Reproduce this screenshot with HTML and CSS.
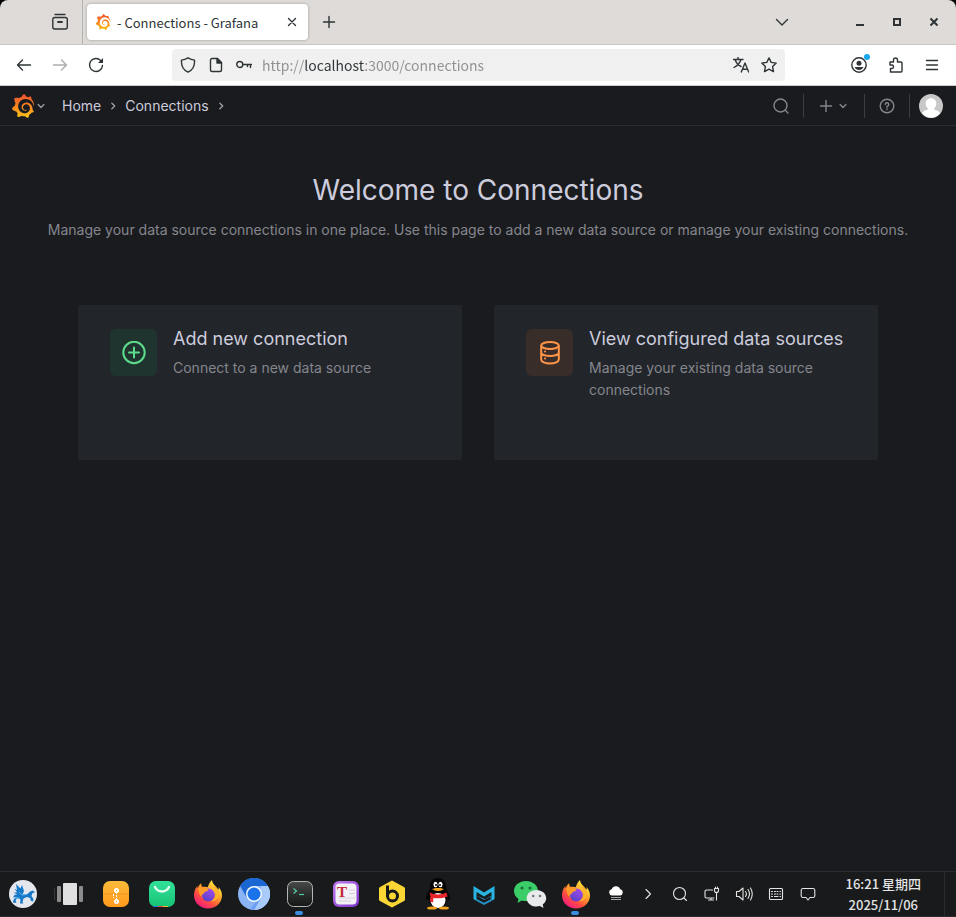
FILE: index.html
```
<!DOCTYPE html>
<html lang="en">
<head>
  <meta charset="UTF-8">
  <meta name="viewport" content="width=device-width, initial-scale=1.0">
  <title>Connections - Grafana</title>
  <link rel="stylesheet" href="styles.css">
</head>
<body>
  <!-- shared icons -->
  <svg class="defs" width="0" height="0" aria-hidden="true">
    <defs>
      <linearGradient id="grafanaFill" x1="0" y1="1" x2="0" y2="0">
        <stop offset="0" stop-color="#fcc51c"/>
        <stop offset="0.45" stop-color="#f98a1d"/>
        <stop offset="1" stop-color="#f05030"/>
      </linearGradient>
      <linearGradient id="foxFill" x1="0.85" y1="0.1" x2="0.2" y2="1">
        <stop offset="0" stop-color="#fff14a"/>
        <stop offset="0.35" stop-color="#ffa52a"/>
        <stop offset="0.65" stop-color="#ff4f3c"/>
        <stop offset="1" stop-color="#f0128c"/>
      </linearGradient>
      <linearGradient id="foxCore" x1="0.7" y1="0" x2="0.2" y2="1">
        <stop offset="0" stop-color="#a04be8"/>
        <stop offset="1" stop-color="#5341c8"/>
      </linearGradient>
      <linearGradient id="archiveFill" x1="0" y1="0" x2="0" y2="1">
        <stop offset="0" stop-color="#fbbb3c"/>
        <stop offset="1" stop-color="#ff9a1c"/>
      </linearGradient>
      <linearGradient id="storeFill" x1="0" y1="0" x2="0" y2="1">
        <stop offset="0" stop-color="#32e29a"/>
        <stop offset="1" stop-color="#18c274"/>
      </linearGradient>
      <linearGradient id="termFill" x1="0" y1="0" x2="0" y2="1">
        <stop offset="0" stop-color="#4a4c4c"/>
        <stop offset="0.5" stop-color="#2b2d2d"/>
        <stop offset="1" stop-color="#151616"/>
      </linearGradient>
      <linearGradient id="typeFill" x1="0" y1="0" x2="1" y2="1">
        <stop offset="0" stop-color="#c07af0"/>
        <stop offset="1" stop-color="#7a35c8"/>
      </linearGradient>
      <symbol id="grafana" viewBox="0 0 24 24">
        <path fill="url(#grafanaFill)" d="M23.02 10.59a8.578 8.578 0 0 0-.862-3.034 8.911 8.911 0 0 0-1.789-2.445c.337-1.342-.413-2.505-.413-2.505-1.292-.08-2.113.4-2.416.62-.052-.02-.102-.044-.154-.064-.22-.089-.446-.172-.677-.247-.231-.073-.47-.14-.711-.197a9.867 9.867 0 0 0-.875-.161C14.557.753 12.94 0 12.94 0c-1.804 1.145-2.147 2.744-2.147 2.744l-.018.093c-.098.029-.2.057-.298.088-.138.042-.275.094-.413.143-.138.055-.275.107-.41.166a8.869 8.869 0 0 0-1.557.87l-.063-.029c-2.497-.955-4.716.195-4.716.195-.203 2.658.996 4.33 1.235 4.636a11.608 11.608 0 0 0-.607 2.635C1.636 12.684.953 15.014.953 15.014c1.926 2.214 4.171 2.351 4.171 2.351.003-.002.006-.002.006-.005.285.509.615.994.986 1.446.156.19.32.371.488.548-.704 2.009.099 3.68.099 3.68 2.144.08 3.553-.937 3.849-1.173a9.784 9.784 0 0 0 3.164.501h.08l.055-.003.107-.002.103-.005.003.002c1.01 1.44 2.788 1.646 2.788 1.646 1.264-1.332 1.337-2.653 1.337-2.94v-.058c0-.02-.003-.039-.003-.06.265-.187.52-.387.758-.6a7.875 7.875 0 0 0 1.415-1.7c1.43.083 2.437-.885 2.437-.885-.236-1.49-1.085-2.216-1.264-2.354l-.018-.013-.016-.013a.217.217 0 0 1-.031-.02c.008-.092.016-.18.02-.27.011-.162.016-.323.016-.48v-.253l-.005-.098-.008-.135a1.891 1.891 0 0 0-.01-.13c-.003-.042-.008-.083-.013-.125l-.016-.124-.018-.122a6.215 6.215 0 0 0-2.032-3.73 6.015 6.015 0 0 0-3.222-1.46 6.292 6.292 0 0 0-.85-.048l-.107.002h-.063l-.044.003-.104.008a4.777 4.777 0 0 0-3.335 1.695c-.332.4-.592.84-.768 1.297a4.594 4.594 0 0 0-.312 1.817l.003.091c.005.055.007.11.013.164a3.615 3.615 0 0 0 .698 1.82 3.53 3.53 0 0 0 1.827 1.282c.33.098.66.14.971.137.039 0 .078 0 .114-.002l.063-.003c.02 0 .041-.003.062-.003.034-.002.065-.007.099-.01.007 0 .018-.003.028-.003l.031-.005.06-.008a1.18 1.18 0 0 0 .112-.02c.036-.008.072-.013.109-.024a2.634 2.634 0 0 0 .914-.415c.028-.02.056-.041.085-.065a.248.248 0 0 0 .039-.35.244.244 0 0 0-.309-.06l-.078.042c-.09.044-.184.083-.283.116a2.476 2.476 0 0 1-.475.096c-.028.003-.054.006-.083.006l-.083.002c-.026 0-.054 0-.08-.002l-.102-.006h-.012l-.024.006c-.016-.003-.031-.003-.044-.006-.031-.002-.06-.007-.091-.01a2.59 2.59 0 0 1-.724-.213 2.557 2.557 0 0 1-.667-.438 2.52 2.52 0 0 1-.805-1.475 2.306 2.306 0 0 1-.029-.444l.006-.122v-.023l.002-.031c.003-.021.003-.04.005-.06a3.163 3.163 0 0 1 1.352-2.29 3.12 3.12 0 0 1 .937-.43 2.946 2.946 0 0 1 .776-.101h.06l.07.002.045.003h.026l.07.005a4.041 4.041 0 0 1 1.635.49 3.94 3.94 0 0 1 1.602 1.662 3.77 3.77 0 0 1 .397 1.414l.005.076.003.075c.002.026.002.05.002.075 0 .024.003.052 0 .07v.065l-.002.073-.008.174a6.195 6.195 0 0 1-.08.639 5.1 5.1 0 0 1-.267.927 5.31 5.31 0 0 1-.624 1.13 5.052 5.052 0 0 1-3.237 2.014 4.82 4.82 0 0 1-.649.066l-.039.003h-.287a6.607 6.607 0 0 1-1.716-.265 6.776 6.776 0 0 1-3.4-2.274 6.75 6.75 0 0 1-.746-1.15 6.616 6.616 0 0 1-.714-2.596l-.005-.083-.002-.02v-.056l-.003-.073v-.096l-.003-.104v-.07l.003-.163c.008-.22.026-.45.054-.678a8.707 8.707 0 0 1 .28-1.355c.128-.444.286-.872.473-1.277a7.04 7.04 0 0 1 1.456-2.1 5.925 5.925 0 0 1 .953-.763c.169-.111.343-.213.524-.306.089-.05.182-.091.273-.135.047-.02.093-.042.138-.062a7.177 7.177 0 0 1 .714-.267l.145-.045c.049-.015.098-.026.148-.041.098-.029.197-.052.296-.076.049-.013.1-.02.15-.033l.15-.032.151-.028.076-.013.075-.01.153-.024c.057-.01.114-.013.171-.023l.169-.021c.036-.003.073-.008.106-.01l.073-.008.036-.003.042-.002c.057-.003.114-.008.171-.01l.086-.006h.023l.037-.003.145-.007a7.999 7.999 0 0 1 1.708.125 7.917 7.917 0 0 1 2.048.68 8.253 8.253 0 0 1 1.672 1.09l.09.077.089.078c.06.052.114.107.171.159.057.052.112.106.166.16.052.055.107.107.159.164a8.671 8.671 0 0 1 1.41 1.978c.012.026.028.052.04.078l.04.078.075.156c.023.051.05.1.07.153l.065.15a8.848 8.848 0 0 1 .45 1.34.19.19 0 0 0 .201.142.186.186 0 0 0 .172-.184c.01-.246.002-.532-.024-.856z"/>
      </symbol>
      <symbol id="firefox" viewBox="0 0 30 30">
        <path fill="url(#foxFill)" d="M19 1c.3 3.400 2 4.700 4 6.700C24.200 9 25 10 25.300 11c.5-.8.5-2 .2-3 2.500 2.500 3.600 5.800 3.500 9C28.700 24.200 22.600 29.500 15 29.500S1.200 24 1 16.500C.9 12.800 2.200 9.500 4.300 7c0 1 .1 1.700.5 2.200C5.500 7 6.500 5.300 8.200 4.200c-.1 1.600.4 3 1.600 3.900 1.500-.5 3.600-.4 5 .2C15.500 5.500 17 3 19 1z"/>
        <circle cx="15.300" cy="16" r="6.500" fill="url(#foxCore)"/>
        <path fill="#ff9a2a" d="M4.800 9.200C7 8 9.800 8 11.800 9.600c1.200 0 2.700.1 3.800.8-.5 1.500-2.300 1.700-3.600 2.400-.7.500-.4 1.300-1.200 1.700-1.600.7-2.500 2-2 3.900-2.500-2.200-3.200-5.700-4-9.200z"/>
        <path fill="#ffb52a" d="M18.600 7.500c4.200 2.400 5.600 7.300 3.400 11.200-1 1.800-2.700 3.200-4.600 3.700 6.300.6 9.600-5 8-11l-3-4z"/>
      </symbol>
      <symbol id="chevronDown" viewBox="0 0 10 10">
        <path d="M2.600 3.800L5 6.200l2.400-2.400" fill="none" stroke="currentColor" stroke-width="1.100" stroke-linecap="round" stroke-linejoin="round"/>
      </symbol>
      <symbol id="chevronRight" viewBox="0 0 10 10">
        <path d="M4 2.600L6.400 5 4 7.400" fill="none" stroke="currentColor" stroke-width="1.100" stroke-linecap="round" stroke-linejoin="round"/>
      </symbol>
    </defs>
  </svg>

  <div class="tabbar">
    <button class="firefox-view" aria-label="Firefox View">
      <svg class="line" width="18" height="18" viewBox="0 0 18 18"><path d="M4 1.500h10"/><rect x="1.800" y="4.500" width="14.500" height="11.500" rx="2"/><path d="M7 9h4" stroke-width="1.800"/></svg>
    </button>
    <div class="tab">
      <svg width="16" height="16"><use href="#grafana"/></svg>
      <span class="tab-title">- Connections - Grafana</span>
      <button class="tab-close" aria-label="Close tab">
        <svg class="line" width="10" height="10" viewBox="0 0 10 10"><path d="M1.500 1.500l7 7M8.500 1.500l-7 7"/></svg>
      </button>
    </div>
    <button class="new-tab" aria-label="New tab">
      <svg class="line" width="14" height="14" viewBox="0 0 14 14"><path d="M7 1.500v11M1.500 7h11"/></svg>
    </button>
    <button class="all-tabs" aria-label="List all tabs">
      <svg class="line" width="14" height="14" viewBox="0 0 14 14"><path d="M1.500 4.500L7 10l5.500-5.500"/></svg>
    </button>
    <div class="window-buttons">
      <button aria-label="Minimize"><svg width="12" height="12"><path d="M2 8h8v2H2z" fill="#2e3436"/></svg></button>
      <button aria-label="Maximize"><svg width="12" height="12"><path d="M3 3h6v6H3z" fill="none" stroke="#2e3436" stroke-width="2"/></svg></button>
      <button aria-label="Close"><svg width="12" height="12"><path d="M2.500 2.500l7 7M9.500 2.500l-7 7" stroke="#2e3436" stroke-width="2"/></svg></button>
    </div>
  </div>

  <div class="toolbar">
    <div class="nav-buttons">
      <button aria-label="Back"><svg class="line" width="16" height="16" viewBox="0 0 16 16"><path d="M14.500 8h-13M6.500 3L1.500 8l5 5"/></svg></button>
      <button aria-label="Forward" disabled><svg class="line" width="16" height="16" viewBox="0 0 16 16"><path d="M1.500 8h13M9.500 3l5 5-5 5"/></svg></button>
      <button aria-label="Reload"><svg class="line" width="16" height="16" viewBox="0 0 16 16"><path d="M14.500 8.500A6.500 6.500 0 1 1 12.800 3.600"/><path d="M15 1v5h-5z" fill="currentColor" stroke="none"/></svg></button>
    </div>
    <div class="urlbar">
      <svg class="line" width="16" height="16" viewBox="0 0 16 16"><path d="M8 .8c2 1.200 4 2 6.500 2.300.4 5.500-1.500 10-6.500 12.100C3 13.100 1.100 8.600 1.500 3.100 4 2.800 6 2 8 .8z"/></svg>
      <svg class="line" width="16" height="16" viewBox="0 0 16 16"><path d="M4 1.500h5.500l4 4V13a1.500 1.500 0 0 1-1.500 1.500H4A1.500 1.500 0 0 1 2.500 13V3A1.500 1.500 0 0 1 4 1.500z"/><path d="M9 1.500V6h4.500z" fill="currentColor"/></svg>
      <svg class="line" width="16" height="16" viewBox="0 0 16 16"><circle cx="3.800" cy="7.500" r="3"/><path d="M7 7.500h8.500M11.500 7.500V9.500M14.500 7.500v3"/></svg>
      <input class="url" type="text" aria-label="Address" value="http://localhost:3000/connections">
      <button aria-label="Translate page"><svg class="line" width="16" height="16" viewBox="0 0 16 16"><path d="M.5 2.500h9.500M5 .5v2M8 2.500C7 6 4.500 8.500 1 10.500M2 2.500c1 3 3 5.500 6 7M8.300 15L12 6l3.700 9M9.500 12.300h5"/></svg></button>
      <button aria-label="Bookmark"><svg class="line" width="16" height="16" viewBox="0 0 16 16"><path d="M8 .9l2.200 4.500 5 .7-3.600 3.500.9 5L8 12.200 3.500 14.600l.9-5L.8 6.100l5-.7z"/></svg></button>
    </div>
    <div class="menu-buttons">
      <button class="account" aria-label="Account"><svg class="line" width="16" height="16" viewBox="0 0 16 16"><circle cx="8" cy="8" r="7.200"/><circle cx="8" cy="6.200" r="2.500" fill="currentColor" stroke="none"/><path d="M3.500 10h9c-1 2-2.500 3-4.500 3s-3.500-1-4.500-3z" fill="currentColor" stroke="none"/></svg><span class="badge"></span></button>
      <button aria-label="Extensions"><svg class="line" width="16" height="16" viewBox="0 0 16 16"><path d="M2.500 15V11.500h1.300a1.700 1.700 0 0 0 0-3.500H2V5h3.500V3a2 2 0 0 1 4 0v2h3.500a1 1 0 0 1 1 1V14a1 1 0 0 1-1 1z"/></svg></button>
      <button aria-label="Menu"><svg class="line" width="14" height="16" viewBox="0 0 14 16"><path d="M1.500 3.500h11M1.500 8h11M1.500 12.500h11"/></svg></button>
    </div>
  </div>

  <header class="app-header">
    <button class="logo" aria-label="Open menu">
      <svg width="24" height="24"><use href="#grafana"/></svg>
      <svg width="12" height="12"><use href="#chevronDown"/></svg>
    </button>
    <nav class="breadcrumbs">
      <a href="#">Home</a>
      <svg width="12" height="12"><use href="#chevronRight"/></svg>
      <a href="#">Connections</a>
      <svg width="12" height="12"><use href="#chevronRight"/></svg>
    </nav>
    <div class="header-actions">
      <button class="search" aria-label="Search"><svg class="line" width="16" height="16" viewBox="0 0 16 16"><circle cx="7.500" cy="7.500" r="6.500"/><path d="M12.500 12.500l2.500 2.500"/></svg></button>
      <button class="add" aria-label="New"><svg class="line" width="14" height="14" viewBox="0 0 14 14"><path d="M7 1.500v11M1.500 7h11"/></svg><svg width="12" height="12"><use href="#chevronDown"/></svg></button>
      <button class="help" aria-label="Help"><svg class="line" width="16" height="16" viewBox="0 0 16 16"><circle cx="8" cy="8" r="6.800"/><path d="M6.200 6.300A1.800 1.800 0 1 1 8 8.300v1M8 11v.5"/></svg></button>
      <button class="avatar" aria-label="Profile"><svg width="24" height="24" viewBox="0 0 24 24"><circle cx="12" cy="12" r="12" fill="#c8c8c8"/><path d="M12 4.200c3.500 0 5.300 2.400 5.300 5.200 0 2-.8 3.600-2 4.800v1.600c3 .6 5 1.900 5.600 3.400A12 12 0 0 1 12 23.800a12 12 0 0 1-8.900-4.600c.6-1.500 2.600-2.800 5.600-3.400v-1.600c-1.200-1.200-2-2.800-2-4.800 0-2.800 1.800-5.200 5.300-5.200z" fill="#fff"/></svg></button>
    </div>
  </header>

  <main class="page">
    <h1>Welcome to Connections</h1>
    <p class="subtitle">Manage your data source connections in one place. Use this page to add a new data source or manage your existing connections.</p>
    <div class="cards">
      <a class="card" href="#">
        <span class="card-icon green">
          <svg width="24" height="24" viewBox="0 0 24 24" fill="none" stroke="currentColor" stroke-width="2" stroke-linecap="round"><circle cx="12" cy="11.500" r="10.700"/><path d="M12 6.500v10M7 11.500h10"/></svg>
        </span>
        <span class="card-text">
          <h2>Add new connection</h2>
          <p>Connect to a new data source</p>
        </span>
      </a>
      <a class="card" href="#">
        <span class="card-icon orange">
          <svg width="24" height="24" viewBox="0 0 24 24" fill="none" stroke="currentColor" stroke-width="2"><ellipse cx="12" cy="4.500" rx="8.800" ry="3.500"/><path d="M3.200 4.500v14c0 2.200 3.900 4 8.800 4s8.800-1.800 8.800-4v-14M3.200 11.500c0 2 3.900 3.500 8.800 3.500s8.800-1.500 8.800-3.500"/><path d="M7 10.500h.1M7 17.500h.1" stroke-linecap="round"/></svg>
        </span>
        <span class="card-text">
          <h2>View configured data sources</h2>
          <p>Manage your existing data source connections</p>
        </span>
      </a>
    </div>
  </main>

  <footer class="taskbar">
    <button aria-label="Start"><svg width="30" height="30" viewBox="0 0 30 30"><circle cx="15" cy="15" r="14" fill="#e4e8ee"/><path fill="#1878c8" d="M8 5l4.500 4.500L14 6l2 6-1.500 3.500 5-.5 2.500-2.500 3-1 2 2-2.500.5-1 3 2 3-.5 2.500-2-.5-1-3-3-1-3.500 1.500-1 3.500 1 1.500h-3.500l.5-4-3-1.500L7.500 21l1 2.500-3 .5-.5-1.500 1-2.500 2.500-2-3.500.5 1.500-2.500 3-1-4-1 3.500-1L6.500 10 9 11z"/><path d="M11 13l3 3 5-.5M8 18.500l4 1" stroke="#59b6ee" fill="none"/></svg></button>
    <span class="separator"></span>
    <div class="apps">
      <button aria-label="Task view"><svg width="30" height="30"><rect x="8" y="4" width="14" height="22" rx="1" fill="#e0e0e0"/><rect x="2" y="7" width="4" height="16" rx="1" fill="#8c8c8c"/><rect x="24" y="7" width="4" height="16" rx="1" fill="#8c8c8c"/></svg></button>
      <button aria-label="Archive manager"><svg width="30" height="30"><rect x="2" y="2" width="26" height="26" rx="7" fill="url(#archiveFill)"/><path d="M2 15h26" stroke="#e98b14" stroke-width=".6"/><g fill="none" stroke="#fff"><circle cx="15.500" cy="11.500" r="1.600" stroke-width="1.800"/><circle cx="15.500" cy="22.500" r="1.600" stroke-width="1.800"/><path d="M15.500 13v8M12.500 15v4" stroke-dasharray="2 1"/></g></svg></button>
      <button aria-label="App store"><svg width="30" height="30"><rect x="2" y="2" width="26" height="26" rx="7" fill="url(#storeFill)"/><path d="M8 8c3 6 11 6 14 0" fill="none" stroke="#e4fff2" stroke-width="2.400" stroke-linecap="round"/><path d="M6 27.500h5" stroke="#2878e0"/><path d="M11 27.500h5" stroke="#e84a3c"/><path d="M16 27.500h5" stroke="#f7b52c"/></svg></button>
      <button aria-label="Firefox"><svg width="30" height="30"><use href="#firefox"/></svg></button>
      <button aria-label="Chromium"><svg width="32" height="32" viewBox="0 0 32 32"><circle cx="16" cy="16" r="16" fill="#8ab4f4"/><path d="M2.100 8A16 16 0 0 1 29.900 8H16L9 20z" fill="#1a66d2"/><path d="M29.900 8A16 16 0 0 1 16 32l7-12V8z" fill="#a9cbfa"/><path d="M16 32l-3.500-.4L19 22l4-2z" fill="#6b9df0"/><circle cx="16" cy="16" r="8" fill="#f3f7fd"/><circle cx="16" cy="16" r="6.500" fill="#1a73e8"/></svg></button>
      <button class="running" aria-label="Terminal"><svg width="30" height="30"><rect x="2.500" y="2.500" width="25" height="25" rx="6" fill="url(#termFill)" stroke="#b4b6b6"/><path d="M8.500 9.500l3 2.500-3 2.500" fill="none" stroke="#55c8a0" stroke-width="1.300"/><path d="M14 15.500h5" stroke="#55c8a0" stroke-width="1.200"/></svg></button>
      <button aria-label="Text editor"><svg width="30" height="30"><rect x="2" y="2" width="26" height="26" rx="6" fill="url(#typeFill)"/><rect x="4.500" y="4.500" width="21" height="21" rx="4" fill="#f3f1f6"/><path d="M18 11h6M18 14.500h6M8 19h16M8 22h12" stroke="#d2d0dc"/><text x="6" y="18" class="type-letter">T</text></svg></button>
      <button aria-label="Beekeeper"><svg width="30" height="30"><path d="M15 1.500l12 6.500q1 .5 1 1.600v10.800q0 1.100-1 1.600l-12 6.500-12-6.500q-1-.5-1-1.600V9.600Q2 8.500 3 8z" fill="#fad635"/><circle cx="15.500" cy="17" r="5" fill="none" stroke="#151719" stroke-width="3"/><path d="M10.500 6.500V17" stroke="#151719" stroke-width="3"/></svg></button>
      <button aria-label="QQ"><svg width="30" height="32" viewBox="0 0 30 32"><path d="M15 0c5 0 8 3.500 8 8.500 0 3 3.500 7 4 11.500.3 2-1 2.500-2.500.5C24 26 20.500 30 15 30S6 26 5.500 20.500C4 22.500 2.700 22 3 20c.5-4.500 4-8.500 4-11.500C7 3.500 10 0 15 0z" fill="#050505"/><ellipse cx="15" cy="22.500" rx="7.500" ry="7.500" fill="#fff"/><path d="M6.500 14.500c5 2.500 12 2.500 17 0l1 4c-5 2-10 2.200-14 1.500l-.5 4.500-3-1 .5-5z" fill="#e9242a"/><ellipse cx="12.500" cy="6.500" rx="2" ry="2.700" fill="#fff"/><ellipse cx="17.500" cy="6.500" rx="2" ry="2.700" fill="#fff"/><circle cx="13" cy="7" r="1"/><circle cx="17" cy="7" r="1"/><path d="M9 11c3-1.500 9-1.500 12 0-3 2.500-9 2.500-12 0z" fill="#f7a51c"/><ellipse cx="9" cy="30" rx="5" ry="1.600" fill="#f7a51c"/><ellipse cx="21" cy="30" rx="5" ry="1.600" fill="#f7a51c"/></svg></button>
      <button aria-label="Mail"><svg width="30" height="30"><path d="M4.500 7L15 13.500 25.500 7v13l-3 2v-9L15 17.500 7.500 13v9l-3-2z" fill="#29b4e2"/><path d="M7.500 16.500L15 21l7.500-4.500V22L15 26l-7.500-4v-2.500l7.500 4 4-2" fill="#2590c4"/><path d="M8.500 17.500L15 21.500l6.500-4v3L15 23.500l-6.500-3z" fill="#191a1b"/></svg></button>
      <button aria-label="WeChat"><svg width="34" height="30" viewBox="0 0 34 30"><path d="M13 2C6.500 2 1 6.200 1 12c0 3.300 1.700 6 4.500 7.900L4.500 24l4.300-2.500c1.300.4 2.700.6 4.200.6 6.500 0 12-4.300 12-10.100S19.500 2 13 2z" fill="#3bcd68"/><circle cx="9" cy="9" r="1.600" fill="#19713c"/><circle cx="17" cy="9" r="1.600" fill="#19713c"/><path d="M23.500 11c-5.500 0-9.800 3.600-9.800 8.200s4.300 8.300 9.800 8.300c1.200 0 2.300-.2 3.400-.5l3.600 1.900-.8-3.400c2.200-1.500 3.500-3.700 3.500-6.300 0-4.600-4.300-8.200-9.700-8.200z" fill="#e9eaeb"/><circle cx="20.200" cy="17" r="1.300" fill="#777"/><circle cx="27" cy="17" r="1.300" fill="#777"/></svg></button>
      <button class="running" aria-label="Firefox window"><svg width="30" height="30"><use href="#firefox"/></svg></button>
    </div>
    <div class="tray">
      <button aria-label="Weather"><svg width="16" height="16" viewBox="0 0 16 16"><path d="M4 9.500a3.200 3.200 0 0 1-.3-6.300 4.500 4.500 0 0 1 8.500 0 3.200 3.200 0 0 1-.2 6.300z" fill="#fff"/><path d="M3 11.500h10M3 13.500h10" stroke="#aaa"/></svg></button>
      <button aria-label="Show hidden icons"><svg class="line" width="16" height="16" viewBox="0 0 16 16"><path d="M6 3.500l4.500 4.500L6 12.500"/></svg></button>
      <button aria-label="Search"><svg class="line" width="16" height="16" viewBox="0 0 16 16"><circle cx="7.500" cy="7.500" r="6"/><path d="M12 12l2.500 2.500"/></svg></button>
      <button aria-label="Network"><svg class="line" width="16" height="16" viewBox="0 0 16 16"><path d="M8.500 4h-6A1.500 1.500 0 0 0 1 5.500v5A1.500 1.500 0 0 0 2.500 12H10M4.500 14h5M7 12v2M12.500 6.500V14M10.500 2.500v2a2 2 0 0 0 4 0v-2zM11.500 1v1.500M13.500 1v1.500"/></svg></button>
      <button aria-label="Volume"><svg class="line" width="18" height="16" viewBox="0 0 18 16"><path d="M1.500 5.500H4L8 2v12l-4-3.500H1.500zM10.500 5.500q1.800 2.500 0 5M13 3.500q3 4.500 0 9M15.500 2q3.500 6 0 12"/></svg></button>
      <button aria-label="Keyboard"><svg class="line" width="16" height="16" viewBox="0 0 16 16"><rect x="1.500" y="2.500" width="13" height="11" rx="1"/><path d="M3.500 5.500h1M6.500 5.500h1M9 5.500h1M12 5.500h.5M3.500 8h1M6.500 8h1M9 8h1M12 8h.5M3.500 10.500h1M6.500 10.500h3.500M12 10.500h.5"/></svg></button>
      <button aria-label="Notifications"><svg class="line" width="16" height="16" viewBox="0 0 16 16"><path d="M3 2.500h10A1.800 1.800 0 0 1 14.800 4v6A1.800 1.800 0 0 1 13 11.500h-3L8 14l-2-2.500H3A1.800 1.800 0 0 1 1.200 10V4A1.800 1.800 0 0 1 3 2.500z"/></svg></button>
    </div>
    <div class="clock">
      <div>16:21 星期四</div>
      <div>2025/11/06</div>
    </div>
    <button class="show-desktop" aria-label="Show desktop"></button>
  </footer>
</body>
</html>
```
FILE: styles.css
```
* {
  box-sizing: border-box;
}

body {
  display: flex;
  flex-direction: column;
  min-height: 100vh;
  margin: 0;
  background-color: #1a1b1f;
  font-family: Inter, "Noto Sans CJK SC", sans-serif;
  color: #ccccdc;
}

button {
  display: flex;
  justify-content: center;
  align-items: center;
  padding: 0;
  border: none;
  background: none;
  color: inherit;
  cursor: pointer;
}

a {
  color: inherit;
  text-decoration: none;
}

svg {
  flex: none;
  display: block;
}

.defs {
  position: absolute;
}

.line {
  fill: none;
  stroke: currentColor;
  stroke-width: 1.4;
  stroke-linecap: round;
  stroke-linejoin: round;
}

/* browser tabs */
.tabbar {
  display: flex;
  align-items: center;
  height: 45px;
  border-bottom: 1px solid #c8c5c2;
  border-radius: 8px 8px 0 0;
  background-color: #dedbd8;
  box-shadow: 0 -8px 0 8px #000;
  clip-path: inset(0);
  color: #2e3436;
  font-family: "Noto Sans CJK SC", sans-serif;
}

.firefox-view {
  width: 83px;
  height: 44px;
  padding-left: 37px;
  border-right: 1px solid #b5b2af;
}

.tab {
  display: flex;
  align-items: center;
  width: 221px;
  height: 36px;
  margin-left: 4px;
  padding: 0 11px 0 8px;
  border-radius: 4px;
  background-color: #fff;
  box-shadow: 0 0 3px #999;
}

.tab-title {
  flex: 1;
  margin-left: 6px;
  font-size: 13px;
  white-space: nowrap;
}

.new-tab {
  margin-left: 14px;
}

.all-tabs {
  margin-left: auto;
}

.window-buttons {
  display: flex;
  gap: 25px;
  padding: 0 16px 0 65px;
}

/* browser toolbar */
.toolbar {
  display: flex;
  align-items: center;
  height: 41px;
  padding: 0 17px 0 16px;
  border-bottom: 1px solid #ccc;
  background-color: #fff;
  color: #2e3436;
}

.nav-buttons {
  display: flex;
  gap: 20px;
}

.nav-buttons button:disabled {
  color: #adadad;
}

.urlbar {
  flex: 1;
  display: flex;
  align-items: center;
  gap: 12px;
  height: 32px;
  margin: 0 66px 0 68px;
  padding: 0 8px;
  border-radius: 4px;
  background-color: #f0f0f0;
}

/* the host part of the address is darker than the rest */
.url {
  flex: 1;
  min-width: 0;
  height: 32px;
  margin-left: -2px;
  padding: 0;
  border: none;
  outline: none;
  background: linear-gradient(to right, #8f8f8f 42px, #2e3436 42px, #2e3436 102px, #8f8f8f 102px);
  background-clip: text;
  -webkit-background-clip: text;
  color: transparent;
  font-family: "Noto Sans CJK SC", sans-serif;
  font-size: 14px;
}

.menu-buttons {
  display: flex;
  gap: 21px;
}

.account {
  position: relative;
}

.badge {
  position: absolute;
  top: -3px;
  right: -3px;
  width: 6px;
  height: 6px;
  border-radius: 50%;
  background-color: #18a8f0;
}

/* grafana header */
.app-header {
  display: flex;
  align-items: center;
  height: 40px;
  padding: 0 13px 0 11px;
  border-bottom: 1px solid #2b2d33;
  font-size: 14px;
}

.logo {
  color: #9a9ba6;
}

.breadcrumbs {
  display: flex;
  align-items: center;
  gap: 6px;
  margin-left: 15px;
}

.breadcrumbs svg {
  color: #a8a9b4;
}

.header-actions {
  display: flex;
  align-items: center;
  height: 24px;
  margin-left: auto;
  color: #85878f;
}

.header-actions button {
  height: 24px;
}

.search {
  width: 44px;
}

.header-actions .add,
.header-actions .help,
.header-actions .avatar {
  border-left: 1px solid #3b3d43;
}

.add {
  gap: 4px;
  width: 61px;
}

.help {
  width: 45px;
}

.header-actions .avatar {
  width: 34px;
  padding-left: 9px;
}

/* connections page */
.page {
  flex: 1;
  padding: 44px 32px;
}

h1 {
  margin: 0;
  font-size: 28px;
  font-weight: 400;
  line-height: 40px;
  text-align: center;
}

.subtitle {
  margin: 9px 0 0;
  color: #85868d;
  font-size: 14px;
  line-height: 22px;
  text-align: center;
}

.cards {
  display: grid;
  grid-template-columns: 1fr 1fr;
  gap: 32px;
  max-width: 800px;
  margin: 64px auto 0;
}

.card {
  display: flex;
  align-items: flex-start;
  gap: 16px;
  min-height: 155px;
  padding: 24px 32px;
  border-radius: 2px;
  background-color: #22252a;
}

.card-icon {
  flex: none;
  display: flex;
  justify-content: center;
  align-items: center;
  width: 47px;
  height: 47px;
  border-radius: 6px;
}

.green {
  background-color: #20342f;
  color: #5cdb8b;
}

.orange {
  background-color: #382d29;
  color: #ff9447;
}

.card h2 {
  margin: 0;
  font-size: 18px;
  font-weight: 400;
  line-height: 20px;
}

.card p {
  margin: 8px 0 0;
  color: #85868d;
  font-size: 14px;
  line-height: 22px;
}

/* desktop taskbar */
.taskbar {
  display: flex;
  align-items: center;
  height: 46px;
  padding-left: 8px;
  border: 1px solid #2c2c2d;
  border-width: 1px 0;
  background-color: #191a1b;
  color: #e4e4e4;
}

.taskbar button {
  width: 30px;
  height: 44px;
}

.separator {
  width: 1px;
  height: 12px;
  margin-left: 16px;
  background-color: #38393a;
}

.apps {
  display: flex;
  gap: 16px;
}

.running {
  position: relative;
}

.running::after {
  content: "";
  position: absolute;
  bottom: 1px;
  left: 10px;
  width: 8px;
  height: 4px;
  border-radius: 2px;
  background-color: #3c8ce0;
}

.type-letter {
  fill: #c42836;
  font-family: "Liberation Serif", serif;
  font-size: 15px;
  font-weight: 700;
}

.tray {
  display: flex;
  gap: 12px;
  margin-left: 15px;
}

.tray .line {
  stroke-width: 1.1;
}

.taskbar .tray button {
  width: 20px;
}

.clock {
  margin: 0 23px 0 auto;
  font-family: "Noto Sans CJK SC", sans-serif;
  font-size: 13px;
  font-weight: 500;
  line-height: 21px;
  text-align: center;
}

.taskbar .show-desktop {
  width: 12px;
  border-left: 1px solid #2c2c2d;
}
```
